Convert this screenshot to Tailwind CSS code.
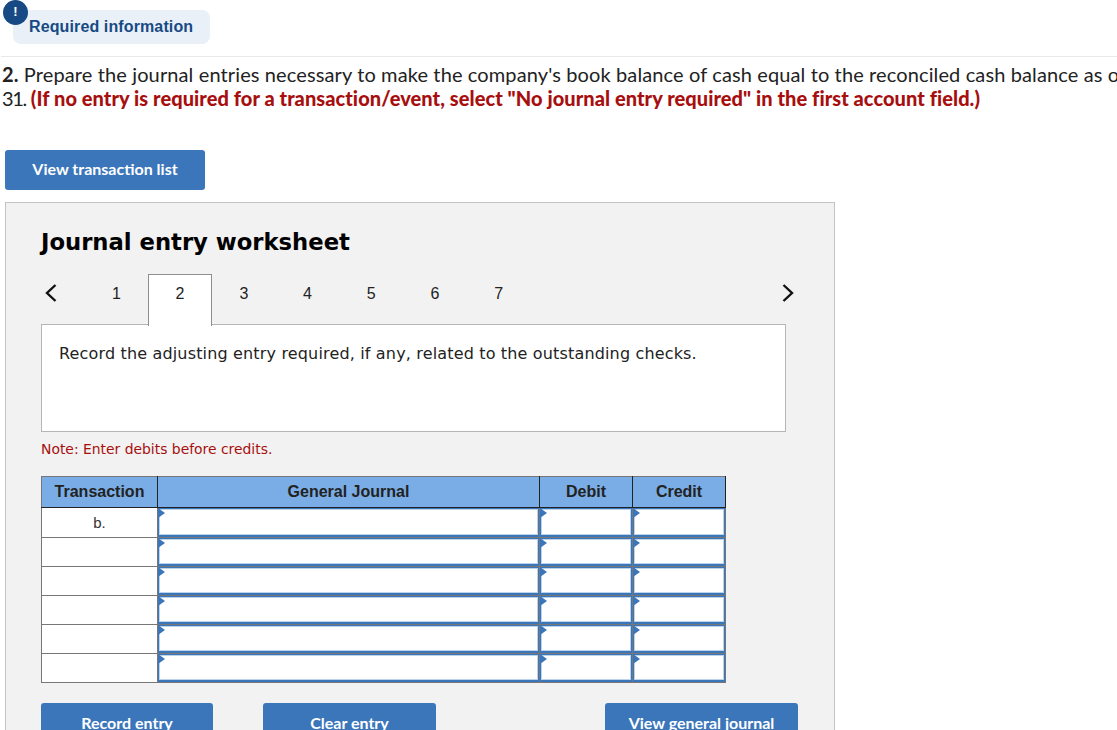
<!DOCTYPE html>
<html lang="en">
<head>
<meta charset="utf-8"/>
<title>Journal entry worksheet</title>
<script src="https://cdn.jsdelivr.net/npm/@tailwindcss/browser@4"></script>
</head>
<body class="bg-white h-[730px] overflow-hidden font-['Lato',sans-serif] text-[#222]">
  <!-- required info badge -->
  <div class="relative h-[57px] border-b border-[#e8e8e8] ml-[1px]">
    <div class="absolute left-[2px] top-0 w-[25px] h-[25px] rounded-full bg-[#174a84] text-white text-center text-[13px] font-bold leading-[24px] font-['Liberation_Sans',sans-serif] z-10">!</div>
    <div class="absolute left-[12px] top-[10px] w-[197px] h-[34px] rounded-lg bg-[#e9f0f8] pl-[16px] text-[16px] font-bold leading-[33px] text-[#174a84] font-['Liberation_Sans',sans-serif] tracking-[0.12px]">Required information</div>
  </div>

  <div class="pl-[2px] pt-[6px] text-[20px] leading-[23px] whitespace-nowrap overflow-hidden">
    <p class="tracking-[0.12px]"><b class="font-bold">2.</b> Prepare the journal entries necessary to make the company's book balance of cash equal to the reconciled cash balance as of June</p>
    <p class="mt-[1px]"><span class="tracking-[-1.4px]">31.</span> <b class="text-[#a70f0f] font-black tracking-[0.06px]">(If no entry is required for a transaction/event, select "No journal entry required" in the first account field.)</b></p>
  </div>

  <div class="pl-[5px] pt-[40px]">
    <button class="w-[200px] h-[40px] rounded-[3px] bg-[#3b76bb] text-white text-[16px] font-bold pb-[2px] block">View transaction list</button>
  </div>

  <!-- worksheet -->
  <div class="ml-[5px] mt-[12px] w-[830px] h-[560px] border border-[#c4c4c4] bg-[#f2f2f2] pl-[35px] pr-[48px] font-['Liberation_Sans',sans-serif]">
    <h2 class="pt-[24px] h-[71px] text-[22.7px] leading-[30px] font-bold text-black font-['DejaVu_Sans',sans-serif]">Journal entry worksheet</h2>

    <div class="flex items-start h-[50px] text-[16px] text-[#222] relative z-10">
      <div class="w-[44px] h-[50px] flex items-start pt-[9px] pl-[3px]">
        <svg width="14" height="20" viewBox="0 0 14 20" fill="none" stroke="#111" stroke-width="2.4"><path d="M11.5 2 L3 10 L11.5 18"/></svg>
      </div>
      <div class="w-[63px] text-center pt-[8px]">1</div>
      <div class="w-[64px] h-[52px] bg-white border border-b-0 border-[#8f8f8f] text-center pt-[7px]">2</div>
      <div class="w-[63.7px] text-center pt-[8px]">3</div>
      <div class="w-[63.7px] text-center pt-[8px]">4</div>
      <div class="w-[63.7px] text-center pt-[8px]">5</div>
      <div class="w-[63.7px] text-center pt-[8px]">6</div>
      <div class="w-[63.7px] text-center pt-[8px]">7</div>
      <div class="ml-auto pt-[9px] mr-[-9px]">
        <svg width="14" height="20" viewBox="0 0 14 20" fill="none" stroke="#111" stroke-width="2.4"><path d="M2.5 2 L11 10 L2.5 18"/></svg>
      </div>
    </div>

    <div class="w-[745px] h-[108px] bg-white border border-[#b5b5b5] pl-[17px] pt-[18px] text-[16px] leading-[21px] text-[#222] font-['DejaVu_Sans',sans-serif] tracking-[0.16px]">Record the adjusting entry required, if any, related to the outstanding checks.</div>

    <p class="mt-[8px] h-[36px] text-[13.9px] leading-[18px] text-[#a70f0f] font-['DejaVu_Sans',sans-serif]">Note: Enter debits before credits.</p>

    <table class="w-[684px] table-fixed border-collapse border border-[#777] text-[16px]">
      <colgroup><col class="w-[116px]"/><col class="w-[382px]"/><col class="w-[93px]"/><col class="w-[93px]"/></colgroup>
      <thead>
        <tr class="h-[31px] bg-[#7aade6] font-bold text-[#222]">
          <th class="border border-[#222] border-t-[#777] border-l-[#777] font-bold">Transaction</th>
          <th class="border border-[#222] border-t-[#777] font-bold">General Journal</th>
          <th class="border border-[#222] border-t-[#777] font-bold">Debit</th>
          <th class="border border-[#222] border-t-[#777] font-bold">Credit</th>
        </tr>
      </thead>
      <tbody class="bg-white">
        <tr class="h-[30px]">
          <td class="border border-[#777] text-center align-top pt-[4px] text-[15px] text-[#333]">b.</td>
          <td class="border border-[#777] p-0"><div class="relative h-[29px] border-x border-t border-b-2 border-[#3b76bb] shadow-[inset_0_0_0_1px_#bcd3ec] after:absolute after:left-[-1px] after:top-[-1px] after:border-y-[5px] after:border-l-[7px] after:border-y-transparent after:border-l-[#3b76bb]"></div></td>
          <td class="border border-[#777] p-0"><div class="relative h-[29px] border-x border-t border-b-2 border-[#3b76bb] shadow-[inset_0_0_0_1px_#bcd3ec] after:absolute after:left-[-1px] after:top-[-1px] after:border-y-[5px] after:border-l-[7px] after:border-y-transparent after:border-l-[#3b76bb]"></div></td>
          <td class="border border-[#777] p-0"><div class="relative h-[29px] border-x border-t border-b-2 border-[#3b76bb] shadow-[inset_0_0_0_1px_#bcd3ec] after:absolute after:left-[-1px] after:top-[-1px] after:border-y-[5px] after:border-l-[7px] after:border-y-transparent after:border-l-[#3b76bb]"></div></td>
        </tr>
        <tr class="h-[29px]">
          <td class="border border-[#777]"></td>
          <td class="border border-[#777] p-0"><div class="relative h-[28px] border-x border-t border-b-2 border-[#3b76bb] shadow-[inset_0_0_0_1px_#bcd3ec] after:absolute after:left-[-1px] after:top-[-1px] after:border-y-[5px] after:border-l-[7px] after:border-y-transparent after:border-l-[#3b76bb]"></div></td>
          <td class="border border-[#777] p-0"><div class="relative h-[28px] border-x border-t border-b-2 border-[#3b76bb] shadow-[inset_0_0_0_1px_#bcd3ec] after:absolute after:left-[-1px] after:top-[-1px] after:border-y-[5px] after:border-l-[7px] after:border-y-transparent after:border-l-[#3b76bb]"></div></td>
          <td class="border border-[#777] p-0"><div class="relative h-[28px] border-x border-t border-b-2 border-[#3b76bb] shadow-[inset_0_0_0_1px_#bcd3ec] after:absolute after:left-[-1px] after:top-[-1px] after:border-y-[5px] after:border-l-[7px] after:border-y-transparent after:border-l-[#3b76bb]"></div></td>
        </tr>
        <tr class="h-[29px]">
          <td class="border border-[#777]"></td>
          <td class="border border-[#777] p-0"><div class="relative h-[28px] border-x border-t border-b-2 border-[#3b76bb] shadow-[inset_0_0_0_1px_#bcd3ec] after:absolute after:left-[-1px] after:top-[-1px] after:border-y-[5px] after:border-l-[7px] after:border-y-transparent after:border-l-[#3b76bb]"></div></td>
          <td class="border border-[#777] p-0"><div class="relative h-[28px] border-x border-t border-b-2 border-[#3b76bb] shadow-[inset_0_0_0_1px_#bcd3ec] after:absolute after:left-[-1px] after:top-[-1px] after:border-y-[5px] after:border-l-[7px] after:border-y-transparent after:border-l-[#3b76bb]"></div></td>
          <td class="border border-[#777] p-0"><div class="relative h-[28px] border-x border-t border-b-2 border-[#3b76bb] shadow-[inset_0_0_0_1px_#bcd3ec] after:absolute after:left-[-1px] after:top-[-1px] after:border-y-[5px] after:border-l-[7px] after:border-y-transparent after:border-l-[#3b76bb]"></div></td>
        </tr>
        <tr class="h-[29px]">
          <td class="border border-[#777]"></td>
          <td class="border border-[#777] p-0"><div class="relative h-[28px] border-x border-t border-b-2 border-[#3b76bb] shadow-[inset_0_0_0_1px_#bcd3ec] after:absolute after:left-[-1px] after:top-[-1px] after:border-y-[5px] after:border-l-[7px] after:border-y-transparent after:border-l-[#3b76bb]"></div></td>
          <td class="border border-[#777] p-0"><div class="relative h-[28px] border-x border-t border-b-2 border-[#3b76bb] shadow-[inset_0_0_0_1px_#bcd3ec] after:absolute after:left-[-1px] after:top-[-1px] after:border-y-[5px] after:border-l-[7px] after:border-y-transparent after:border-l-[#3b76bb]"></div></td>
          <td class="border border-[#777] p-0"><div class="relative h-[28px] border-x border-t border-b-2 border-[#3b76bb] shadow-[inset_0_0_0_1px_#bcd3ec] after:absolute after:left-[-1px] after:top-[-1px] after:border-y-[5px] after:border-l-[7px] after:border-y-transparent after:border-l-[#3b76bb]"></div></td>
        </tr>
        <tr class="h-[29px]">
          <td class="border border-[#777]"></td>
          <td class="border border-[#777] p-0"><div class="relative h-[28px] border-x border-t border-b-2 border-[#3b76bb] shadow-[inset_0_0_0_1px_#bcd3ec] after:absolute after:left-[-1px] after:top-[-1px] after:border-y-[5px] after:border-l-[7px] after:border-y-transparent after:border-l-[#3b76bb]"></div></td>
          <td class="border border-[#777] p-0"><div class="relative h-[28px] border-x border-t border-b-2 border-[#3b76bb] shadow-[inset_0_0_0_1px_#bcd3ec] after:absolute after:left-[-1px] after:top-[-1px] after:border-y-[5px] after:border-l-[7px] after:border-y-transparent after:border-l-[#3b76bb]"></div></td>
          <td class="border border-[#777] p-0"><div class="relative h-[28px] border-x border-t border-b-2 border-[#3b76bb] shadow-[inset_0_0_0_1px_#bcd3ec] after:absolute after:left-[-1px] after:top-[-1px] after:border-y-[5px] after:border-l-[7px] after:border-y-transparent after:border-l-[#3b76bb]"></div></td>
        </tr>
        <tr class="h-[29px]">
          <td class="border border-[#777]"></td>
          <td class="border border-[#777] p-0"><div class="relative h-[28px] border-x border-t border-b-2 border-[#3b76bb] shadow-[inset_0_0_0_1px_#bcd3ec] after:absolute after:left-[-1px] after:top-[-1px] after:border-y-[5px] after:border-l-[7px] after:border-y-transparent after:border-l-[#3b76bb]"></div></td>
          <td class="border border-[#777] p-0"><div class="relative h-[28px] border-x border-t border-b-2 border-[#3b76bb] shadow-[inset_0_0_0_1px_#bcd3ec] after:absolute after:left-[-1px] after:top-[-1px] after:border-y-[5px] after:border-l-[7px] after:border-y-transparent after:border-l-[#3b76bb]"></div></td>
          <td class="border border-[#777] p-0"><div class="relative h-[28px] border-x border-t border-b-2 border-[#3b76bb] shadow-[inset_0_0_0_1px_#bcd3ec] after:absolute after:left-[-1px] after:top-[-1px] after:border-y-[5px] after:border-l-[7px] after:border-y-transparent after:border-l-[#3b76bb]"></div></td>
        </tr>
      </tbody>
    </table>

    <div class="flex mt-[20px] text-white text-[16px] font-bold font-['Lato',sans-serif]">
      <button class="shrink-0 w-[172px] h-[40px] rounded-[3px] bg-[#3b76bb]">Record entry</button>
      <button class="shrink-0 ml-[50px] w-[173px] h-[40px] rounded-[3px] bg-[#3b76bb]">Clear entry</button>
      <button class="shrink-0 ml-[169px] w-[193px] h-[40px] rounded-[3px] bg-[#3b76bb]">View general journal</button>
    </div>
  </div>
</body>
</html>
